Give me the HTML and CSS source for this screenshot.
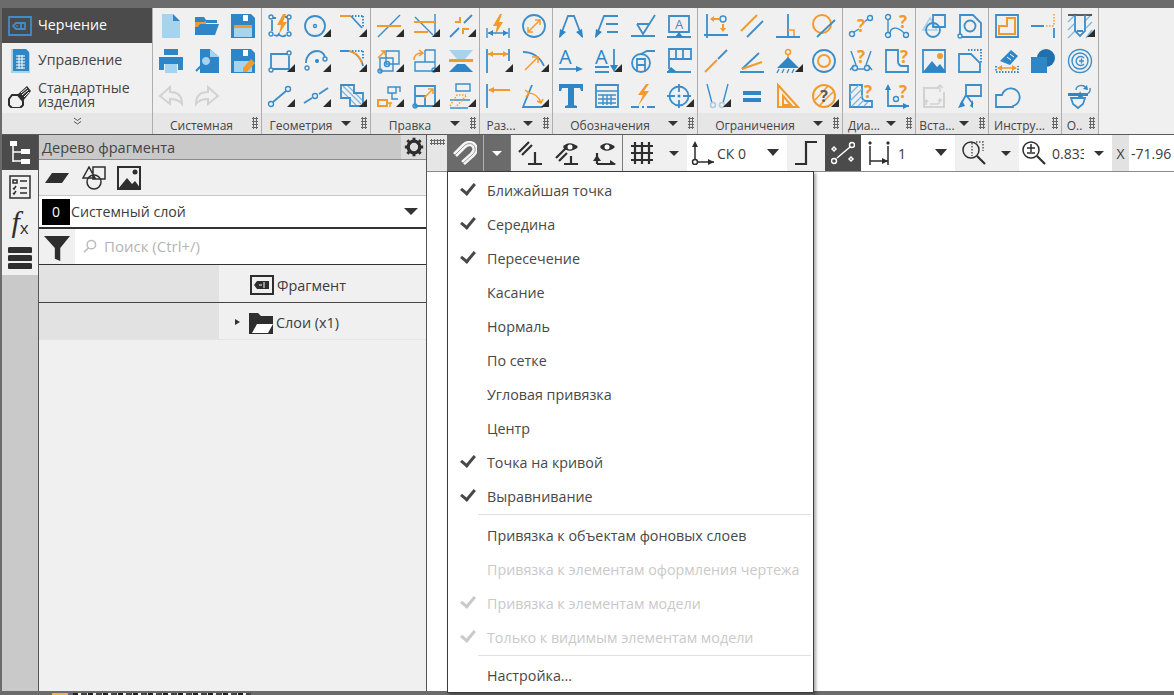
FILE: index.html
```html
<!DOCTYPE html>
<html lang="ru">
<head>
  <meta charset="UTF-8" />
  <title>Черчение</title>
  <link rel="stylesheet" href="styles.css">
</head>
<body>
<div class="app">

  <div class="ribbon">
    <div class="modes">
      <div class="mode active">
        <svg class="mode-ic" viewBox="0 0 24 24"><path class="sb" d="M1 3h22v18H1z"/><path class="sb" d="M5 12l3-3h9v6H8zM13 9v6"/><circle class="fb" cx="9" cy="12" r="1"/></svg>
        <span>Черчение</span>
      </div>
      <div class="mode">
        <svg class="mode-ic" viewBox="0 0 24 24"><path class="fl" d="M3 0h15l4 4v20H3z"/><path class="fb" d="M5 0h13l3 3v19H5z"/><path class="thin-w" d="M8 7h9M8 10h9M8 13h9M8 16h9M8 19h9M11 6v14M14 6v14"/></svg>
        <span>Управление</span>
      </div>
      <div class="mode">
        <svg class="mode-ic" viewBox="0 0 24 24"><path class="sk" d="M1 15l3-4h6l5 6v4l-3 3H4l-3-3z"/><path class="fk" d="M9 11l10-9 4 5-8 10z"/><path class="thin-w" d="M13 9l6-5M14 11l6-5M16 13l5-5"/></svg>
        <span class="two">Стандартные<br>изделия</span>
      </div>
      <div class="foot chev">
        <svg width="9" height="8" viewBox="0 0 9 8"><path class="sd1" d="M1 1l3.5 2.500L8 1M1 4.500l3.500 2.500L8 4.500"/></svg>
      </div>
    </div>

    <div class="group">
      <div class="grid c3">
        <div class="cell"><svg viewBox="0 0 24 24"><path class="fl" d="M3 0h11v7h7v17H3z"/><path class="fb" d="M14 0l7 7h-7z"/></svg></div>
        <div class="cell"><svg viewBox="0 0 24 24"><path class="fb" d="M0 21V3h9l2 3h11v3H7L5 13v8z"/><path class="fo" d="M0 8h9l2-1v3H5l-2 3H0z"/><path class="fb" d="M6 10h18l-4 11H0z"/></svg></div>
        <div class="cell"><svg viewBox="0 0 24 24"><path class="fb" d="M0 0h20l4 4v20H0z"/><path class="fw" d="M12 1h5v6h-5z"/><path class="fl" d="M3 12h18v11H3z"/><path class="fo" d="M3 11h18v3H3z"/></svg></div>
        <div class="cell"><svg viewBox="0 0 24 24"><path class="fb" d="M5 0h14v6H5zM0 8h24v13h-5v-6H5v6H0z"/><path class="fl" d="M6 15h12v9H6z"/></svg></div>
        <div class="cell"><svg viewBox="0 0 24 24"><path class="fb" d="M5 0h10l9 8v16H5z"/><path class="fl" d="M15 0l9 8h-9z"/><circle class="fl" cx="11" cy="12" r="5"/><path class="sb2" d="M11 7a5 5 0 1 1-.01 0M7 16l-6 6"/></svg></div>
        <div class="cell"><svg viewBox="0 0 24 24"><path class="fb" d="M0 0h20l4 4v20H0z"/><path class="fw" d="M12 1h5v6h-5z"/><path class="fl" d="M3 12h18v11H3z"/><path class="fo" d="M12 23v-4l8-9 4 4-8 9z"/></svg></div>
        <div class="cell"><svg viewBox="0 0 24 24"><path class="sg" d="M1 12L11 3v5c8 0 12 4 12 12-3-4-6-5-12-5v5z"/></svg></div>
        <div class="cell"><svg viewBox="0 0 24 24"><path class="sg" d="M23 12L13 3v5C5 8 1 12 1 20c3-4 6-5 12-5v5z"/></svg></div>
      </div>
      <div class="foot"><span class="name plain">Системная</span><i class="grip"></i></div>
    </div>

    <div class="group">
      <div class="grid c3">
        <div class="cell"><svg viewBox="0 0 24 24"><path class="sb" d="M5 4h3M17 3h3M4 6v11M20 5v12M6 21c2 1 4 1 5-1 1 3 5 3 7 1"/><circle class="sb1" cx="3" cy="3" r="2"/><circle class="sb1" cx="21" cy="3" r="2"/><circle class="sb1" cx="3" cy="20" r="2"/><circle class="sb1" cx="21" cy="20" r="2"/><path class="fo" d="M15 0l-6 11h4l-2 9 8-12h-4l3-8z"/></svg></div>
        <div class="cell more"><svg viewBox="0 0 24 24"><circle class="sb" cx="11" cy="12" r="10"/><circle class="sb1" cx="11" cy="12" r="1.500"/></svg></div>
        <div class="cell more"><svg viewBox="0 0 24 24"><path class="so" d="M0 2h11"/><path class="sb" d="M11 2l11 12"/><path class="dot" d="M12 2h11M23 2v12"/></svg></div>
        <div class="cell more"><svg viewBox="0 0 24 24"><path class="sb" d="M3 19V5h17M21 7v13H5"/><circle class="sb1" cx="21" cy="4" r="2"/><circle class="sb1" cx="3" cy="21" r="2"/></svg></div>
        <div class="cell more"><svg viewBox="0 0 24 24"><path class="sb" d="M2 14C2 6 8 2 13 2c5 0 7 3 8 6"/><circle class="sb1" cx="3" cy="19" r="2"/><circle class="sb1" cx="21" cy="10" r="2"/><circle class="fb" cx="13" cy="12" r="2"/></svg></div>
        <div class="cell more"><svg viewBox="0 0 24 24"><path class="sb" d="M0 2h10C16 4 22 10 23 17"/><path class="so" d="M9 2c6 1 11 6 13 12"/><path class="dot" d="M12 2h11M23 2v8"/></svg></div>
        <div class="cell more"><svg viewBox="0 0 24 24"><path class="sb" d="M5 18L18 7"/><circle class="sb1" cx="3" cy="20" r="2.500"/><circle class="sb1" cx="20" cy="5" r="2.500"/></svg></div>
        <div class="cell more"><svg viewBox="0 0 24 24"><path class="sb" d="M0 19L8 14M15 10l9-6"/><circle class="sb1" cx="11" cy="12" r="2.500"/></svg></div>
        <div class="cell more"><svg viewBox="0 0 24 24"><path class="hatch-b" d="M3 2l18 18M8 2l13 13M2 7l14 14M14 8l8 8"/><path class="sb" d="M1 1h13v8h9v13H10v-8H1z"/></svg></div>
      </div>
      <div class="foot"><span class="name">Геометрия</span><b class="tri"></b><i class="grip"></i></div>
    </div>

    <div class="group">
      <div class="grid c3">
        <div class="cell more"><svg viewBox="0 0 24 24"><path class="sb1" d="M1 23L23 1"/><path class="so" d="M0 12h24"/></svg></div>
        <div class="cell more"><svg viewBox="0 0 24 24"><path class="sb1" d="M22 0v22M2 3l18 18"/><path class="so" d="M1 8h21M1 18h14"/></svg></div>
        <div class="cell more"><svg viewBox="0 0 24 24"><path class="sb" d="M1 23l9-9M15 9l8-8"/><path class="so" d="M6 8h5V3M14 20v-5h6"/></svg></div>
        <div class="cell more"><svg viewBox="0 0 24 24"><path class="sb1" d="M9 2h13v13H9zM3 9h13v13H3z"/><circle class="sb1" cx="10" cy="15" r="2.500"/><circle class="sb1" cx="3" cy="22" r="2"/><path class="so1" d="M1 9l7-7M4 2h4v4"/></svg></div>
        <div class="cell more"><svg viewBox="0 0 24 24"><path class="sb1" d="M2 13h20v9H2zM12 1h10v21M12 13V1"/><circle class="sb1" cx="21" cy="21" r="2"/><path class="so1" d="M1 11c0-5 3-7 8-7M6 1l4 3-4 3"/></svg></div>
        <div class="cell"><svg viewBox="0 0 24 24"><path class="fl" d="M0 1h24l-8 9H8z"/><path class="fo" d="M0 10h24v3H0z"/><path class="fb" d="M8 15h8l8 8H0z"/></svg></div>
        <div class="cell more"><svg viewBox="0 0 24 24"><path class="sb1" d="M11 3h8v6h-8zM19 3h4v5M15 9v6h6"/><path class="so" d="M1 16h9v6H1z"/><path class="so1" d="M10 19h5M13 23v-4"/></svg></div>
        <div class="cell more"><svg viewBox="0 0 24 24"><path class="sb" d="M2 2h20v20H2zM2 12h10v10"/><circle class="sb1" cx="2" cy="22" r="2"/><path class="so1" d="M11 14L20 5M15 5h5v5"/></svg></div>
        <div class="cell more"><svg viewBox="0 0 24 24"><path class="sb1" d="M7 0h14v7H7zM1 16h20M1 24h18"/><path class="dot-o" d="M1 22L8 11h9M6 24l11-12"/></svg></div>
      </div>
      <div class="foot"><span class="name">Правка</span><b class="tri"></b><i class="grip"></i></div>
    </div>

    <div class="group">
      <div class="grid c2">
        <div class="cell"><svg viewBox="0 0 24 24"><path class="fo" d="M14 0L7 12h4l-2 9 8-13h-4l3-8z"/><path class="sb1" d="M1 14v10M23 14v10M2 19h20"/><path class="fb" d="M2 19l5-3v6zM22 19l-5-3v6z"/></svg></div>
        <div class="cell"><svg viewBox="0 0 24 24"><circle class="sb" cx="12" cy="12" r="11"/><path class="so1" d="M6 18L18 6M13 6h5v5M6 13v5h5"/></svg></div>
        <div class="cell more"><svg viewBox="0 0 24 24"><path class="sb" d="M1 0v24M23 0v12"/><path class="so" d="M2 5h20"/><path class="fo" d="M2 5l5-3v6zM22 5l-5-3v6z"/></svg></div>
        <div class="cell more"><svg viewBox="0 0 24 24"><path class="sb" d="M1 3c9 0 17 5 21 14"/><path class="so1" d="M3 21L16 8M10 8h6v6"/></svg></div>
        <div class="cell"><svg viewBox="0 0 24 24"><path class="sb" d="M1 0v24M1 6h0"/><path class="so" d="M3 6h21"/><path class="fo" d="M2 6l6-3v6z"/></svg></div>
        <div class="cell more"><svg viewBox="0 0 24 24"><path class="sb" d="M10 1L1 23h20"/><path class="so1" d="M6 9c6 0 11 4 13 10M3 6l4 3-3 4M21 15l-2 4-4-2"/></svg></div>
      </div>
      <div class="foot"><span class="name">Раз...</span><b class="tri"></b><i class="grip"></i></div>
    </div>

    <div class="group">
      <div class="grid c4">
        <div class="cell"><svg viewBox="0 0 24 24"><path class="sb" d="M1 23L9 2h6l8 21"/><path class="fb" d="M0 24l1-9 6 3zM24 24l-1-9-6 3z"/></svg></div>
        <div class="cell"><svg viewBox="0 0 24 24"><path class="sb" d="M1 23L9 2h14M11 10h12M12 18h11M9 2"/><path class="fb" d="M0 24l1-9 6 3z"/></svg></div>
        <div class="cell"><svg viewBox="0 0 24 24"><path class="sb" d="M0 22h24M6 10l6 10L24 1M6 10h13"/></svg></div>
        <div class="cell"><svg viewBox="0 0 24 24"><path class="sb" d="M2 2h20v16H2zM0 23h24"/><path class="fb" d="M8 23l4-5 4 5z"/><text class="ic-a" x="12" y="15" text-anchor="middle">A</text></svg></div>
        <div class="cell"><svg viewBox="0 0 24 24"><text class="ic-t" x="0" y="15">A</text><path class="sb" d="M0 20h22"/><path class="fb" d="M24 20l-7-3v6z"/></svg></div>
        <div class="cell more"><svg viewBox="0 0 24 24"><text class="ic-t" x="0" y="15">A</text><path class="sb" d="M0 18h14M0 23h14M19 0v18"/><path class="fb" d="M19 23l-4-7h8z"/></svg></div>
        <div class="cell"><svg viewBox="0 0 24 24"><circle class="sb" cx="10" cy="14" r="9"/><path class="sb" d="M6 23V10h8v13M6 16h8M10 5l6-3h8"/></svg></div>
        <div class="cell"><svg viewBox="0 0 24 24"><path class="sb" d="M2 0h22v10H2zM0 23h24M2 0v20M9 0v10M16 0v10"/><path class="fb" d="M0 23l4-5 6 5z"/></svg></div>
        <div class="cell"><svg viewBox="0 0 24 24"><path class="fb" d="M0 0h24v7h-2l-1-3h-6v17l3 1v2H6v-2l3-1V4H3L2 7H0z"/></svg></div>
        <div class="cell"><svg viewBox="0 0 24 24"><path class="sb" d="M1 1h22v22H1z"/><path class="sb1" d="M1 7h22M3 11h18M3 15h18M3 19h18M8 11v10M12 11v10M16 11v10"/></svg></div>
        <div class="cell"><svg viewBox="0 0 24 24"><path class="fo" d="M15 0L7 11h5l-5 11 11-15h-5l5-7z"/><path class="sb" d="M0 23h8M11 23h2M16 23h8"/></svg></div>
        <div class="cell more"><svg viewBox="0 0 24 24"><circle class="sb" cx="12" cy="12" r="9.500"/><path class="sb" d="M12 0v8M12 16v8M0 12h8M16 12h8"/><circle class="fb" cx="12" cy="12" r="1.500"/></svg></div>
      </div>
      <div class="foot"><span class="name">Обозначения</span><b class="tri"></b><i class="grip"></i></div>
    </div>

    <div class="group">
      <div class="grid c4">
        <div class="cell"><svg viewBox="0 0 24 24"><path class="sb" d="M3 0v24M0 21h24"/><circle class="sb1" cx="19" cy="5" r="3"/><path class="so" d="M8 5h7M19 10v7"/><path class="fo" d="M6 5l4-3v6zM19 18l-3-4h6z"/></svg></div>
        <div class="cell"><svg viewBox="0 0 24 24"><path class="so" d="M1 17L17 1"/><path class="sb" d="M7 23L23 7"/></svg></div>
        <div class="cell"><svg viewBox="0 0 24 24"><path class="sb" d="M0 23h24M12 0v23"/><path class="so1" d="M12 16h6v6"/></svg></div>
        <div class="cell"><svg viewBox="0 0 24 24"><circle class="so" cx="10" cy="10" r="9"/><path class="sb" d="M5 23L23 6"/></svg></div>
        <div class="cell"><svg viewBox="0 0 24 24"><path class="so" d="M1 23l12-12"/><path class="sb" d="M14 10l9-9"/></svg></div>
        <div class="cell"><svg viewBox="0 0 24 24"><path class="sb" d="M0 23h24M2 20L19 4"/><path class="so" d="M2 20l20-7"/></svg></div>
        <div class="cell more"><svg viewBox="0 0 24 24"><circle class="so1" cx="12" cy="3" r="2.500"/><path class="so1" d="M12 5v4"/><path class="fb" d="M12 8l11 11H1z"/><path class="sb1" d="M3 20l-2 4M8 20l-2 4M13 20l-2 4M18 20l-2 4"/></svg></div>
        <div class="cell"><svg viewBox="0 0 24 24"><circle class="sb" cx="12" cy="12" r="11"/><circle class="so" cx="12" cy="12" r="6"/></svg></div>
        <div class="cell more"><svg viewBox="0 0 24 24"><path class="sb1" d="M3 0l5 19M24 0l-5 19"/><circle class="sl" cx="9" cy="21" r="2.500"/><circle class="sl" cx="18" cy="21" r="2.500"/></svg></div>
        <div class="cell"><svg viewBox="0 0 24 24"><path class="fb" d="M3 7h18v4H3zM3 14h18v4H3z"/></svg></div>
        <div class="cell"><svg viewBox="0 0 24 24"><path class="so" d="M2 1l20 22H2zM7 12l8 9H7z"/></svg></div>
        <div class="cell more"><svg viewBox="0 0 24 24"><circle class="so" cx="12" cy="12" r="11"/><path class="so1" d="M3 16L16 2M8 21L21 8"/><text class="ic-q" x="12" y="18" text-anchor="middle">?</text></svg></div>
      </div>
      <div class="foot"><span class="name">Ограничения</span><b class="tri"></b><i class="grip"></i></div>
    </div>

    <div class="group">
      <div class="grid c2">
        <div class="cell"><svg viewBox="0 0 24 24"><circle class="sb1" cx="3" cy="20" r="2.500"/><circle class="sb1" cx="21" cy="4" r="2.500"/><path class="sb1" d="M5 18l5-3M14 9l5-4"/><text class="ic-qo" x="12" y="18" text-anchor="middle">?</text></svg></div>
        <div class="cell"><svg viewBox="0 0 24 24"><circle class="sb1" cx="3" cy="3" r="2.500"/><circle class="sb1" cx="3" cy="21" r="2.500"/><circle class="sb1" cx="21" cy="21" r="2.500"/><path class="sb1" d="M3 6v12M5 20c0-6 6-9 14-1"/><text class="ic-qo" x="18" y="14" text-anchor="middle">?</text></svg></div>
        <div class="cell"><svg viewBox="0 0 24 24"><path class="sb1" d="M2 2l5 14M22 2l-5 14M8 20h8M1 21l4-5M23 21l-4-5"/><circle class="sb1" cx="6" cy="19" r="2.500"/><circle class="sb1" cx="18" cy="19" r="2.500"/><text class="ic-qo" x="12" y="14" text-anchor="middle">?</text></svg></div>
        <div class="cell"><svg viewBox="0 0 24 24"><path class="sb" d="M1 1h12v12c0 2 2 4 4 4h6v6H1z"/><text class="ic-qo" x="19" y="14" text-anchor="middle">?</text></svg></div>
        <div class="cell"><svg viewBox="0 0 24 24"><path class="sb" d="M1 1h12v12c0 2 2 4 4 4h6v6H1z"/><path class="hatch-b" d="M1 10l9-9M1 17l12-12M3 22l11-11M9 22l6-6M15 22l4-4"/><text class="ic-qo" x="19" y="14" text-anchor="middle">?</text></svg></div>
        <div class="cell"><svg viewBox="0 0 24 24"><path class="sb" d="M3 3v19h21"/><path class="fb" d="M3 0l-3 6h6zM24 22l-6-3v6z"/><circle class="sb1" cx="11" cy="15" r="2.500"/><text class="ic-qo" x="18" y="14" text-anchor="middle">?</text></svg></div>
      </div>
      <div class="foot"><span class="name">Диа...</span><b class="tri"></b><i class="grip"></i></div>
    </div>

    <div class="group">
      <div class="grid c2">
        <div class="cell"><svg viewBox="0 0 24 24"><path class="sl" d="M1 16L8 4l7 12z"/><path class="sb" d="M11 1h12v12H11z"/><circle class="sb" cx="11" cy="16" r="7"/></svg></div>
        <div class="cell"><svg viewBox="0 0 24 24"><path class="sb" d="M2 21V1h13l8 8v14H4"/><circle class="sb" cx="12" cy="12" r="5.500"/><circle class="sb1" cx="2" cy="22" r="2"/></svg></div>
        <div class="cell"><svg viewBox="0 0 24 24"><path class="sb" d="M1 1h22v22H1z"/><circle class="fo" cx="18" cy="7" r="3"/><path class="fb" d="M1 23l9-11 5 6 3-3 6 8z"/></svg></div>
        <div class="cell"><svg viewBox="0 0 24 24"><path class="sb" d="M1 5h12l9 9v9H1z"/><path class="dot" d="M10 1h13v13"/></svg></div>
        <div class="cell"><svg viewBox="0 0 24 24"><path class="sg" d="M17 4H2v19h20V8"/><path class="sg1" d="M18 8V1M15 4l3-3 3 3M4 16v5M2 18l2-2 2 2M8 20h7c2 0 3-2 3-5M16 17l2-2 2 2"/></svg></div>
        <div class="cell"><svg viewBox="0 0 24 24"><path class="sb" d="M8 1h15v11H8zM8 1v10L3 20"/><path class="sb" d="M8 11l7 9"/><path class="fb" d="M0 24l4-8 3 6zM15 24l-3-2 3-6z"/></svg></div>
      </div>
      <div class="foot"><span class="name">Вста...</span><b class="tri"></b><i class="grip"></i></div>
    </div>

    <div class="group">
      <div class="grid c2">
        <div class="cell"><svg viewBox="0 0 24 24"><path class="sb" d="M1 1h22v22H1z"/><path class="so" d="M4 20V12h8V4h8v16z"/></svg></div>
        <div class="cell"><svg viewBox="0 0 24 24"><path class="sb" d="M0 12h13M23 14v10"/><path class="dot-o" d="M15 12h8M23 0v12"/></svg></div>
        <div class="cell"><svg viewBox="0 0 24 24"><path class="fb" d="M5 12L16 1l7 6-8 9z"/><path class="thin-w" d="M15 5l4 3M12 8l4 3"/><path class="dot" d="M1 17v6h22v-6"/><path class="so1" d="M3 19h18"/><path class="fo" d="M2 19l5-3v6zM22 19l-5-3v6z"/></svg></div>
        <div class="cell"><svg viewBox="0 0 24 24"><circle cx="15" cy="9" r="9" class="fd"/><path class="fb" d="M0 8h16v16H0z"/></svg></div>
        <div class="cell"><svg viewBox="0 0 24 24"><path class="sb" d="M1 11h6a9 9 0 1 1 11 11v1H1z"/></svg></div>
        <div class="cell"></div>
      </div>
      <div class="foot"><span class="name plain">Инстру...</span><i class="grip"></i></div>
    </div>

    <div class="group last">
      <div class="grid c1">
        <div class="cell more"><svg viewBox="0 0 24 24"><path class="hatch-b" d="M0 8l8-8M0 16L6 10M0 24l8-8M16 8l8-8M18 14l6-6M18 24l6-8"/><path class="sk1" d="M0 1h24"/><path class="sb" d="M7 1v16l5 5 5-5V1M9 17h6"/></svg></div>
        <div class="cell"><svg viewBox="0 0 24 24"><circle class="sb1" cx="12" cy="12" r="11.500"/><circle class="sb1" cx="12" cy="12" r="8"/><path class="sb1" d="M16 9a4.500 4.500 0 1 0 0 6"/><path class="sb1" d="M11 12h5M13.500 9.500v5"/></svg></div>
        <div class="cell"><svg viewBox="0 0 24 24"><path class="fb" d="M0 9h20v3H0z"/><path class="sb" d="M3 14h14l-2 6-5 4-5-4z"/><path class="sb1" d="M8 6c0-5 8-6 10-2M22 4c1 5-3 7-8 6"/><path class="fb" d="M19 1l1 5-5-1zM12 7l3 6-5 0z"/></svg></div>
      </div>
      <div class="foot"><span class="name plain">О..</span><i class="grip"></i></div>
    </div>
    <div class="ribbon-rest"></div>
  </div>

  <div class="work">
    <div class="sidetabs">
      <div class="stab on"><svg viewBox="0 0 24 24"><path class="sw" d="M5 2v19M5 11h10M5 20h10"/><path class="fw" d="M2 0h7v5H2zM13 8h9v5h-9zM13 18h9v5h-9z"/></svg></div>
      <div class="stab h33"><svg viewBox="0 0 24 24"><path class="sk1" d="M2 1h20v22H2z"/><path class="sk1" d="M5 5h4v3H5zM12 6h7M5 13l1 1 2-3M12 13h7M5 18l1 1 2-3M12 18h7"/></svg></div>
      <div class="stab fx"><i>f</i><span>x</span></div>
      <div class="stab"><svg viewBox="0 0 24 24"><path class="fk" d="M2 1h20a2.500 2.500 0 0 1 0 6H2a2.500 2.500 0 0 1 0-6zM2 9h20a2.500 2.500 0 0 1 0 6H2a2.500 2.500 0 0 1 0-6zM2 17h20a2.500 2.500 0 0 1 0 6H2a2.500 2.500 0 0 1 0-6z"/></svg></div>
      <div class="stab-rest"></div>
    </div>

    <div class="panel">
      <div class="panel-head">
        <span>Дерево фрагмента</span>
        <div class="gear"><svg viewBox="0 0 24 24" width="20" height="20"><circle class="gear-ring" cx="12" cy="12" r="7"/><path class="gear-teeth" d="M12 1v5M12 18v5M1 12h5M18 12h5M4 4l4 4M16 16l4 4M20 4l-4 4M8 16l-4 4"/></svg></div>
      </div>
      <div class="panel-icons">
        <svg class="pi wide" viewBox="0 0 24 24"><path class="fk" d="M7 7h17l-7 10H0z"/></svg>
        <svg class="pi" viewBox="0 0 24 24"><path class="sk1" d="M7 1L1 12h12zM11 1h12v12H11z"/><circle class="sk1" cx="12" cy="16" r="7"/></svg>
        <svg class="pi" viewBox="0 0 24 24"><path class="sk" d="M1 1h22v22H1z"/><circle class="fk" cx="18" cy="6" r="2.500"/><path class="fk" d="M1 23l9-11 5 6 3-3 6 8z"/></svg>
      </div>
      <div class="layer">
        <span class="layer-no">0</span>
        <span class="layer-name">Системный слой</span>
        <b class="tri big"></b>
      </div>
      <div class="search">
        <div class="funnel"><svg viewBox="0 0 24 24" width="26" height="26"><path class="fk" d="M0 1h24L15 12v12l-5-2V12z"/></svg></div>
        <div class="search-box">
          <svg viewBox="0 0 16 16" width="15" height="15"><circle class="search-ring" cx="10" cy="6" r="4.500"/><path class="search-ring" d="M7 9.500L2 14"/></svg>
          <span>Поиск (Ctrl+/)</span>
        </div>
      </div>
      <div class="tree-row first">
        <div class="indent"></div>
        <div class="node node-a">
          <svg viewBox="0 0 24 24" width="24" height="24"><path class="sk" d="M1 3h22v18H1z"/><path class="fk" d="M4 12l3-4h12v8H7z"/><path class="thin-w" d="M14 9v6M9 12h3"/></svg>
          <span>Фрагмент</span>
        </div>
      </div>
      <div class="tree-row second">
        <div class="indent"></div>
        <div class="node node-b">
          <b class="arrow"></b>
          <svg viewBox="0 0 24 24" width="24" height="24"><path class="fk" d="M0 3h9l3 3h12v18H0z"/><path class="fw" d="M3 23l5-9h16l-5 9z"/></svg>
          <span>Слои (x1)</span>
        </div>
      </div>
    </div>

    <div class="main">
      <div class="toolbar">
        <div class="tb grip-box"><i class="grip wide-grip"></i></div>
        <div class="tb dark w36"><svg viewBox="0 0 24 24"><path class="magnet" d="M2 14l9-9c4-4 10-3 11 2 1 3-1 5-3 7l-9 8"/><path class="magnet-in" d="M2 14l9-9c4-4 10-3 11 2 1 3-1 5-3 7l-9 8"/></svg></div>
        <div class="tb dark w27 sep"><b class="tri white"></b></div>
        <div class="tb first-ic"><svg viewBox="0 0 24 24"><path class="sk2" d="M1 11L11 1M4 14L14 4M10 23h14M17 11v12"/></svg></div>
        <div class="tb w38"><svg viewBox="0 0 24 24"><path class="sk2" d="M1 17L11 7M4 20l8-8M9 23h14M16 15v8"/><path class="fk" d="M8 6c3-5 10-5 15 0-5 5-12 5-15 0z"/><circle class="fw" cx="15" cy="6" r="2.500"/></svg></div>
        <div class="tb w36"><svg viewBox="0 0 24 24"><path class="sk2" d="M5 12v11M5 23h15"/><path class="fk" d="M1 20l4-6 4 6zM24 23l-6-4v8z"/><path class="fk" d="M8 6c3-5 10-5 15 0-5 5-12 5-15 0z"/><circle class="fw" cx="15" cy="6" r="2.500"/></svg></div>
        <div class="tb w38 dv"><svg viewBox="0 0 24 24"><path class="sk2" d="M1 5h22M1 12h22M1 19h22M5 1v22M12 1v22M19 1v22"/></svg></div>
        <div class="tb w27"><b class="tri"></b></div>
        <div class="tb white-bg sk-box">
          <svg viewBox="0 0 24 24" width="24" height="24"><path class="sk1" d="M5 3v15M8 21h16"/><circle class="sk1" cx="5" cy="21" r="2.500"/><path class="fk" d="M5 0l-3 6h6zM24 21l-6-3v6z"/></svg>
          <span class="val">СК 0</span><b class="tri big"></b>
        </div>
        <div class="tb w38"><svg viewBox="0 0 24 24"><path class="sk2" d="M1 23h11V1h11"/></svg></div>
        <div class="tb dark2 w36"><svg viewBox="0 0 24 24"><path class="sw1" d="M6 17L19 6"/><circle class="sw1" cx="3" cy="20" r="2.500"/><circle class="sw1" cx="21" cy="4" r="2.500"/><path class="sw1" d="M3 6l2 2-2 2-2-2zM20 16l2 2-2 2-2-2z"/></svg></div>
        <div class="tb white-bg step-box">
          <svg viewBox="0 0 24 24" width="24" height="24"><path class="sk1" d="M3 5v19M21 5v19M3 20h18"/><path class="fk" d="M21 20l-6-3v6zM3 0l2 2-2 2-2-2zM21 0l2 2-2 2-2-2z"/></svg>
          <span class="val one">1</span><b class="tri big"></b>
        </div>
        <div class="tb zoom-box">
          <svg viewBox="0 0 24 24" width="24" height="24"><circle class="sk1" cx="9" cy="9" r="8"/><path class="sk2" d="M15 15l8 8"/><path class="dot-k" d="M10 2v13M14 1h7v9"/></svg>
          <b class="tri"></b>
        </div>
        <div class="tb white-bg scale-box">
          <svg viewBox="0 0 24 24" width="24" height="24"><circle class="sk1" cx="9" cy="9" r="8"/><path class="sk2" d="M15 15l8 8"/><path class="sk1" d="M5 7h8M9 3v8M5 12h8"/></svg>
          <span class="val clip">0.833</span><b class="tri"></b>
        </div>
        <div class="tb x-label">X</div>
        <div class="tb white-bg x-val">-71.96</div>
      </div>
      <div class="canvas"></div>

      <ul class="menu">
        <li class="chk">Ближайшая точка</li>
        <li class="chk">Середина</li>
        <li class="chk">Пересечение</li>
        <li>Касание</li>
        <li>Нормаль</li>
        <li>По сетке</li>
        <li>Угловая привязка</li>
        <li>Центр</li>
        <li class="chk">Точка на кривой</li>
        <li class="chk">Выравнивание</li>
        <li class="rule"></li>
        <li>Привязка к объектам фоновых слоев</li>
        <li class="off">Привязка к элементам оформления чертежа</li>
        <li class="off chk">Привязка к элементам модели</li>
        <li class="off chk">Только к видимым элементам модели</li>
        <li class="rule"></li>
        <li>Настройка...</li>
      </ul>
    </div>
  </div>

  <div class="peek"><i class="peek-y"></i><i class="peek-t"></i></div>
</div>
</body>
</html>
```

FILE: styles.css
```css
* {
  box-sizing: border-box;
  margin: 0;
  padding: 0;
}
html, body {
  height: 100%;
  overflow: hidden;
}
body {
  font-family: "Open Sans", "Noto Sans", sans-serif;
  font-size: 14px;
  color: #3c3c3c;
  background: #6b6b6b;
}
.app {
  height: 695px;
  padding: 8px 0 0 2px;
  display: flex;
  flex-direction: column;
  background: #6b6b6b;
}

/* ribbon */
.ribbon {
  height: 126px;
  display: flex;
  background: #f0f0f0;
  flex: none;
}
.modes {
  width: 150px;
  display: flex;
  flex-direction: column;
}
.mode {
  height: 35px;
  display: flex;
  align-items: center;
  gap: 6px;
  padding-left: 6px;
  font-size: 14.200px;
  color: #444;
}
.mode span {
  margin-top: -2px;
}
.mode.active {
  background: #4b4b4b;
  color: #fff;
}
.mode-ic {
  width: 24px;
  height: 24px;
  flex: none;
}
.two {
  line-height: 14px;
}
.foot {
  height: 21px;
  background: #e6e6e6;
  display: flex;
  align-items: center;
  font-size: 12px;
  color: #444;
  position: relative;
}
.chev {
  justify-content: center;
  padding-bottom: 6px;
}
.group {
  border-left: 1px solid #adadad;
  display: flex;
  flex-direction: column;
}
.group.last {
  border-right: 1px solid #adadad;
}
.grid {
  height: 105px;
  display: grid;
  grid-template-rows: repeat(3, 35px);
}
.c1 { grid-template-columns: 36px; }
.c2 { grid-template-columns: repeat(2, 36px); }
.c3 { grid-template-columns: repeat(3, 36px); }
.c4 { grid-template-columns: repeat(4, 36px); }
.cell {
  display: flex;
  align-items: center;
  justify-content: center;
  position: relative;
}
.cell svg {
  width: 24px;
  height: 24px;
  overflow: visible;
}
.cell.more::after {
  content: "";
  position: absolute;
  right: 3px;
  bottom: 6px;
  border-left: 8px solid transparent;
  border-bottom: 8px solid #2b2b2b;
}
.group .foot {
  justify-content: center;
}
.name {
  white-space: nowrap;
  padding: 4px 30px 0 0;
}
.name.plain {
  padding-right: 11px;
}
.tri {
  position: absolute;
  right: 19px;
  top: 8px;
  border-left: 5px solid transparent;
  border-right: 5px solid transparent;
  border-top: 5px solid #333;
}
.grip {
  position: absolute;
  right: 3px;
  top: 4px;
  width: 6px;
  height: 12px;
  background-image: radial-gradient(circle, #666 1px, transparent 1.2px);
  background-size: 3px 3px;
}
.ribbon-rest {
  flex: 1;
}

/* svg paint */
svg path, svg circle {
  fill: none;
}
svg .fb { fill: #2f86c7; }
svg .fd { fill: #2070ad; }
svg .fl { fill: #a6d3ee; }
svg .fo { fill: #f39a2c; }
svg .fk { fill: #2e2e2e; }
svg .fw { fill: #fff; }
.sb { stroke: #3b8ec9; stroke-width: 1.800; }
.sb1 { stroke: #3b8ec9; stroke-width: 1.400; }
.sb2 { stroke: #2f86c7; stroke-width: 2; }
.so { stroke: #f39a2c; stroke-width: 2; }
.so1 { stroke: #f39a2c; stroke-width: 1.500; }
.sl { stroke: #a9cde6; stroke-width: 1.500; }
.sg { stroke: #d2d2d2; stroke-width: 2; }
.sg1 { stroke: #d2d2d2; stroke-width: 1.500; }
.sk { stroke: #2e2e2e; stroke-width: 2; }
.sk1 { stroke: #2e2e2e; stroke-width: 1.500; }
.sk2 { stroke: #2e2e2e; stroke-width: 2.200; }
.sw { stroke: #fff; stroke-width: 1.500; }
.sw1 { stroke: #fff; stroke-width: 1.500; }
.sd1 { stroke: #555; stroke-width: 1; }
.dot { stroke: #3b8ec9; stroke-width: 2; stroke-dasharray: 1.500 1.500; }
.dot-o { stroke: #f39a2c; stroke-width: 1.500; stroke-dasharray: 1.500 1.500; }
.dot-k { stroke: #555; stroke-width: 1.500; stroke-dasharray: 1.500 1.500; }
.thin-w { stroke: #fff; stroke-width: 1; }
.hatch-b { stroke: #7fb7dc; stroke-width: 1.300; }
.magnet { stroke: #f4f4f4; stroke-width: 5.500; }
.magnet-in { stroke: #9a9a9a; stroke-width: 1; }
.ic-a, .ic-t, .ic-q, .ic-qo {
  font-family: "Open Sans", sans-serif;
}
.ic-a { font-size: 13px; fill: #3b8ec9; }
.ic-t { font-size: 20px; fill: #2f86c7; }
.ic-q { font-size: 16px; font-weight: 700; fill: #5a5a5a; }
.ic-qo { font-size: 17px; font-weight: 700; fill: #f39a2c; }

/* work area */
.work {
  height: 557px;
  display: flex;
  flex: none;
  border-top: 1px solid #5a5a5a;
  position: relative;
}
.sidetabs {
  width: 36px;
  display: flex;
  flex-direction: column;
  flex: none;
}
.stab {
  height: 35px;
  display: flex;
  align-items: center;
  justify-content: center;
  background: #f0f0f0;
}
.stab svg {
  width: 24px;
  height: 24px;
}
.stab.on {
  background: #4b4b4b;
}
.stab.h33 {
  height: 33px;
}
.fx {
  height: 37px;
  font-family: "Liberation Serif", serif;
  font-size: 30px;
  color: #2e2e2e;
}
.fx span {
  font-family: "Open Sans", sans-serif;
  font-size: 17px;
  padding-top: 11px;
}
.stab-rest {
  flex: 1;
  background: #c9c9c9;
}

/* tree panel */
.panel {
  width: 389px;
  flex: none;
  background: #f0f0f0;
  border-left: 1px solid #555;
  border-right: 1px solid #555;
}
.panel-head {
  height: 25px;
  background: #c9c9c9;
  border-bottom: 1px solid #8c8c8c;
  display: flex;
  align-items: center;
  justify-content: space-between;
  padding-left: 3px;
  font-size: 14.600px;
  color: #444;
}
.gear {
  width: 25px;
  height: 24px;
  background: #dcdcdc;
  display: flex;
  align-items: center;
  justify-content: center;
}
.gear-ring {
  stroke: #2e2e2e;
  stroke-width: 4;
}
.gear-teeth {
  stroke: #2e2e2e;
  stroke-width: 3.500;
}
.panel-icons {
  height: 36px;
  display: flex;
  align-items: center;
  gap: 11px;
  padding-left: 6px;
  border-bottom: 1px solid #c8c8c8;
}
.pi {
  width: 24px;
  height: 24px;
}
.pi.wide {
  margin-right: 2px;
}
.layer {
  height: 33px;
  background: #fff;
  border-bottom: 2px solid #333;
  display: flex;
  align-items: center;
  position: relative;
  padding-left: 3px;
}
.layer-no {
  width: 28px;
  height: 26px;
  background: #000;
  color: #fff;
  display: flex;
  align-items: center;
  justify-content: center;
  flex: none;
}
.layer-name {
  padding-left: 1px;
  font-size: 14.200px;
}
.tri.big {
  border-left-width: 7px;
  border-right-width: 7px;
  border-top-width: 7px;
  right: 8px;
  top: 12px;
}
.search {
  height: 36px;
  display: flex;
  border-bottom: 1px solid #333;
}
.funnel {
  width: 36px;
  display: flex;
  align-items: center;
  justify-content: center;
  padding-top: 2px;
}
.search-box {
  flex: 1;
  background: #fff;
  display: flex;
  align-items: center;
  gap: 7px;
  padding-left: 7px;
  color: #b4b4b4;
  font-size: 15px;
}
.search-box span {
  margin-top: -2px;
}
.search-ring {
  stroke: #bdbdbd;
  stroke-width: 1.600;
}
.tree-row {
  display: flex;
}
.tree-row.first {
  height: 38px;
  border-bottom: 1px solid #444;
}
.tree-row.second {
  height: 37px;
  border-bottom: 1px solid #e4e4e4;
}
.indent {
  width: 180px;
  background: #e2e2e2;
  flex: none;
}
.node {
  display: flex;
  align-items: center;
  gap: 3px;
  color: #3c3c3c;
  font-size: 14.400px;
}
.node-a {
  padding: 3px 0 0 31px;
}
.node-b {
  padding: 2px 0 0 16px;
}
.arrow {
  border-left: 5px solid #333;
  border-top: 3px solid transparent;
  border-bottom: 3px solid transparent;
  margin-right: 6px;
}

/* toolbar over the drawing */
.main {
  flex: 1;
  min-width: 0;
  position: relative;
  display: flex;
  flex-direction: column;
}
.toolbar {
  height: 37px;
  display: flex;
  background: #f0f0f0;
  border-bottom: 1px solid #8a8a8a;
  overflow: hidden;
  flex: none;
}
.tb {
  height: 36px;
  flex: none;
  display: flex;
  align-items: center;
  justify-content: center;
  position: relative;
}
.tb > svg {
  width: 24px;
  height: 24px;
}
.grip-box {
  width: 20px;
  background: #e6e6e6;
}
.wide-grip {
  width: 15px;
  height: 6px;
  left: 3px;
  top: 4px;
  right: auto;
}
.w36 { width: 36px; }
.w38 { width: 38px; }
.w27 { width: 27px; }
.dark {
  background: #6b6b6b;
}
.dark2 {
  background: #4b4b4b;
}
.sep {
  border-left: 1px solid #b0b0b0;
}
.first-ic {
  border-left: 1px solid #7a7a7a;
  width: 38px;
}
.dv {
  border-left: 1px solid #7a7a7a;
}
.toolbar .tri {
  position: static;
}
.tri.white {
  border-top-color: #fff;
}
.white-bg {
  background: #fff;
}
.sk-box {
  width: 100px;
  justify-content: flex-start;
  padding-left: 3px;
}
.val {
  padding-left: 3px;
}
.toolbar .tri.big {
  position: absolute;
  right: 8px;
  top: 14px;
  border-left-width: 6px;
  border-right-width: 6px;
}
.step-box {
  width: 94px;
  justify-content: flex-start;
  padding-left: 6px;
}
.one {
  padding-left: 7px;
}
.zoom-box {
  width: 64px;
  justify-content: flex-start;
  padding-left: 7px;
  gap: 15px;
}
.scale-box {
  width: 93px;
  justify-content: flex-start;
  padding-left: 3px;
}
.clip {
  width: 38px;
  overflow: hidden;
  padding-left: 6px;
  margin-right: 10px;
}
.x-label {
  width: 17px;
  background: #e2e2e2;
}
.x-val {
  flex: 1;
  justify-content: flex-start;
  padding-left: 2px;
  white-space: nowrap;
  overflow: hidden;
}
.canvas {
  flex: 1;
  background: #fff;
}

/* snap menu */
.menu {
  position: absolute;
  left: 20px;
  top: 36px;
  width: 367px;
  height: 522px;
  background: #fff;
  border: 1px solid #3c3c3c;
  box-shadow: 2px 2px 3px rgba(0, 0, 0, .35);
  list-style: none;
  padding-top: 2px;
  z-index: 2;
  font-size: 14.300px;
}
.menu li {
  height: 34px;
  line-height: 34px;
  padding-left: 39px;
  position: relative;
  color: #484848;
  white-space: nowrap;
}
.menu li.off {
  color: #c9c9c9;
}
.menu li.chk::before {
  content: "";
  position: absolute;
  left: 13px;
  top: 9px;
  width: 11px;
  height: 6px;
  border-left: 3px solid #484848;
  border-bottom: 3px solid #484848;
  transform: rotate(-50deg);
}
.menu li.off.chk::before {
  border-color: #c9c9c9;
}
.menu li.rule {
  height: 1px;
  margin: 0 2px 4px 30px;
  background: #e0e0e0;
}
.menu li.rule:nth-last-child(2) {
  margin-bottom: 3px;
}

/* sliver of the window below */
.peek {
  flex: 1;
  display: flex;
  align-items: flex-end;
  padding-left: 50px;
  gap: 5px;
}
.peek-y {
  width: 16px;
  height: 2px;
  background: #e8b93c;
}
.peek-t {
  width: 178px;
  height: 2px;
  background: repeating-linear-gradient(90deg, #222 0 5px, #eee 5px 8px, #444 8px 14px, #ddd 14px 15px);
}
```
